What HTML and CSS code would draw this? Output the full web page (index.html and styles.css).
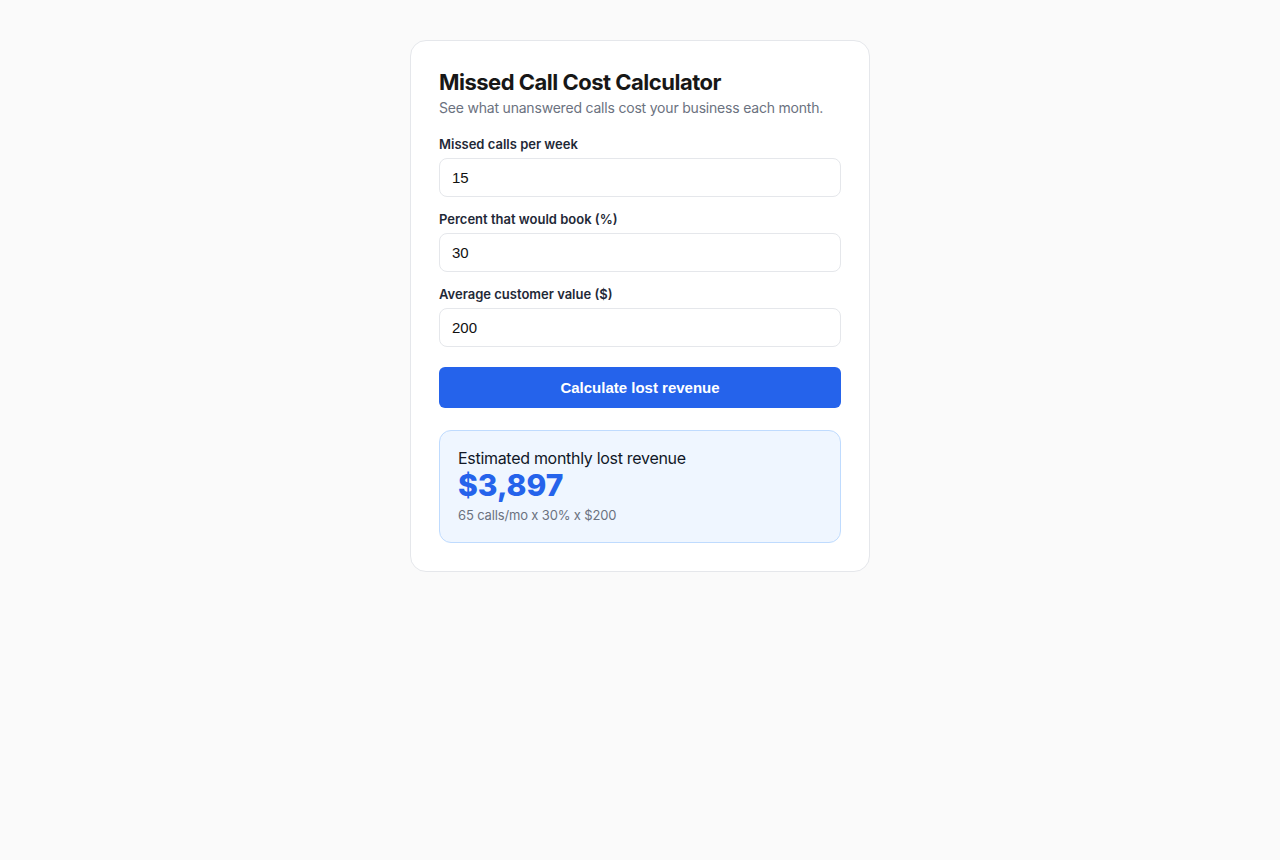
FILE: index.html
```html
<!DOCTYPE html>
<html lang="en">
<head>
    <meta charset="UTF-8">
    <meta name="viewport" content="width=device-width, initial-scale=1.0">
    <title>Missed Call Cost Calculator</title>
    <link rel="stylesheet" href="styles.css">
</head>
<body>
    <div class="card">
        <h1 class="title">Missed Call Cost Calculator</h1>
        <p class="subtitle">See what unanswered calls cost your business each month.</p>

        <div class="field">
            <label for="calls">Missed calls per week</label>
            <input id="calls" type="number" value="15">
        </div>
        <div class="field">
            <label for="percent">Percent that would book (%)</label>
            <input id="percent" type="number" value="30">
        </div>
        <div class="field">
            <label for="value">Average customer value ($)</label>
            <input id="value" type="number" value="200">
        </div>

        <button class="calc-btn" id="calc">Calculate lost revenue</button>

        <div class="result">
            <div class="result-label">Estimated monthly lost revenue</div>
            <div class="result-amount" id="amount">$3,897</div>
            <div class="result-note" id="note">65 calls/mo x 30% x $200</div>
        </div>
    </div>
    <script>
        document.getElementById("calc").addEventListener("click", function () {
            var calls = Number(document.getElementById("calls").value) || 0;
            var pct = Number(document.getElementById("percent").value) || 0;
            var val = Number(document.getElementById("value").value) || 0;
            var monthly = Math.round(calls * 4.33);
            var lost = Math.round(calls * 4.33 * pct / 100 * val);
            document.getElementById("amount").textContent = "$" + lost.toLocaleString("en-US");
            document.getElementById("note").textContent = monthly + " calls/mo x " + pct + "% x $" + val;
        });
    </script>
</body>
</html>
```

FILE: styles.css
```css
body{
    margin: 0;
    background-color: #fafafa;
    font-family: Inter, "Liberation Sans", Arial, sans-serif;
    color: #111827;
}
.card{
    width: 402px;
    margin: 40px auto 0;
    padding: 28px;
    background-color: #fff;
    border: 1px solid #e5e7eb;
    border-radius: 16px;
}
.title{
    margin: 0;
    font-size: 22px;
    line-height: 26px;
    font-weight: 700;
    color: #171717;
    letter-spacing: -0.5px;
}
.subtitle{
    margin: 3px 0 18px;
    font-size: 14px;
    line-height: 20px;
    color: #6b7280;
    letter-spacing: -0.2px;
}
.field{
    margin-bottom: 14px;
}
.field label{
    display: block;
    margin-bottom: 6px;
    font-size: 13px;
    line-height: 16px;
    font-weight: 600;
    color: #1f2937;
}
.field input{
    display: block;
    box-sizing: border-box;
    width: 100%;
    height: 39px;
    padding: 0 12px;
    font-family: "Liberation Sans", Arial, sans-serif;
    font-size: 15px;
    color: #111;
    background: #fff;
    border: 1px solid #e5e7eb;
    border-radius: 8px;
    outline: none;
    -moz-appearance: textfield;
}
.field input::-webkit-outer-spin-button,
.field input::-webkit-inner-spin-button{
    -webkit-appearance: none;
    margin: 0;
}
.calc-btn{
    display: block;
    width: 100%;
    height: 41px;
    margin-top: 20px;
    border: none;
    border-radius: 6px;
    background-color: #2563eb;
    color: #fff;
    font-family: "Liberation Sans", Arial, sans-serif;
    font-size: 15px;
    font-weight: 700;
    cursor: pointer;
}
.result{
    margin-top: 22px;
    padding: 18px;
    background-color: #eff6ff;
    border: 1px solid #bfdbfe;
    border-radius: 12px;
}
.result-label{
    font-size: 16px;
    line-height: 18px;
    color: #111827;
    letter-spacing: -0.3px;
}
.result-amount{
    font-size: 30px;
    line-height: 36px;
    font-weight: 800;
    color: #2563eb;
}
.result-note{
    margin-top: 4px;
    font-size: 13px;
    line-height: 17px;
    color: #6b7280;
    letter-spacing: -0.15px;
}
```
